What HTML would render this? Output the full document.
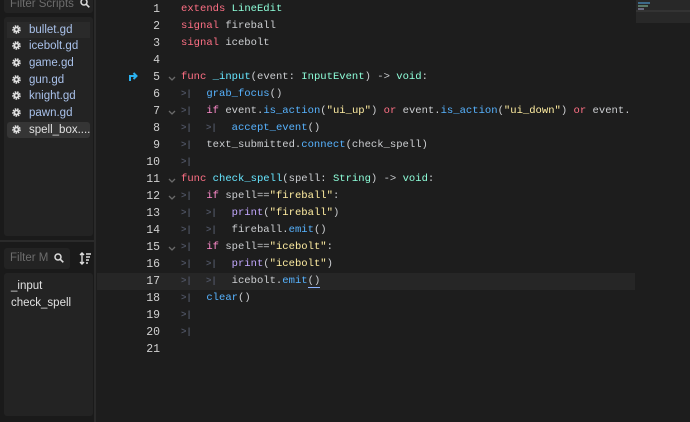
<!DOCTYPE html>
<html><head><style>
*{margin:0;padding:0;box-sizing:border-box}
body{width:690px;height:422px;background:#1d1d1d;overflow:hidden;position:relative;font-family:"Liberation Sans",sans-serif;color:#d4d4d4}
.side{position:absolute;left:0;top:0;width:96px;height:422px;background:#1a1a1a;border-right:2px solid #2a2a2a}
.box{position:absolute;background:#232323;border-radius:3px}
.file{position:absolute;left:7px;height:16px;width:83px;font-size:11.5px;line-height:16px;color:#a9c1ea;padding-left:22px}
.file.sel{background:#353535;border-radius:3px;color:#e0e0e0}
.file.hov{background:#2a2a2a}
.gear{position:absolute;left:4px;top:2px;width:11px;height:11px}
.code{position:absolute;left:0;top:0;font-family:"Liberation Mono",monospace;font-size:10.55px}
.ln{position:absolute;left:100px;width:60px;text-align:right;color:#d0d0d0;height:17px;line-height:17px;font-size:11.5px}
.tx{position:absolute;left:181px;white-space:pre;height:17px;line-height:17px;color:#cdcfd2}
.tab{position:absolute;color:#4d5261;font-size:9px;height:17px;line-height:17px;font-weight:bold}
.fold{position:absolute;left:168px;width:8px;height:5px}
.k{color:#ff7085}.c{color:#8effda}.f{color:#57b3ff}.s{color:#ffeda1}.w{color:#ff8ccc}.v{color:#cdcfd2}.fn{color:#66e6ff}.b{color:#c3a8ff}
</style></head><body>
<div class="side">
 <div class="box" style="left:4px;top:-6px;width:89px;height:19px;"><span style="position:absolute;left:6px;top:4px;font-size:11.5px;color:#6d6d6d">Filter Scripts</span>
 <svg style="position:absolute;left:76px;top:4px" width="10" height="10" viewBox="0 0 10 10"><circle cx="4" cy="4" r="3" fill="none" stroke="#ddd" stroke-width="1.5"/><line x1="6.3" y1="6.3" x2="9.3" y2="9.3" stroke="#ddd" stroke-width="1.6"/></svg></div>
 <div class="box" style="left:4px;top:17px;width:89px;height:219px;"></div>
 <div class="file hov" style="top:22px"><svg class="gear" viewBox="0 0 12 12"><circle cx="6" cy="6" r="3.6" fill="none" stroke="#e0e0e0" stroke-width="2.2" stroke-dasharray="1.6 0.9"/><circle cx="6" cy="6" r="3.2" fill="#e0e0e0"/><circle cx="6" cy="6" r="1.3" fill="#2a2a2a"/></svg>bullet.gd</div>
 <div class="file" style="top:38px"><svg class="gear" viewBox="0 0 12 12"><circle cx="6" cy="6" r="3.6" fill="none" stroke="#e0e0e0" stroke-width="2.2" stroke-dasharray="1.6 0.9"/><circle cx="6" cy="6" r="3.2" fill="#e0e0e0"/><circle cx="6" cy="6" r="1.3" fill="#232323"/></svg>icebolt.gd</div>
 <div class="file" style="top:55px"><svg class="gear" viewBox="0 0 12 12"><circle cx="6" cy="6" r="3.6" fill="none" stroke="#e0e0e0" stroke-width="2.2" stroke-dasharray="1.6 0.9"/><circle cx="6" cy="6" r="3.2" fill="#e0e0e0"/><circle cx="6" cy="6" r="1.3" fill="#232323"/></svg>game.gd</div>
 <div class="file" style="top:72px"><svg class="gear" viewBox="0 0 12 12"><circle cx="6" cy="6" r="3.6" fill="none" stroke="#e0e0e0" stroke-width="2.2" stroke-dasharray="1.6 0.9"/><circle cx="6" cy="6" r="3.2" fill="#e0e0e0"/><circle cx="6" cy="6" r="1.3" fill="#232323"/></svg>gun.gd</div>
 <div class="file" style="top:88px"><svg class="gear" viewBox="0 0 12 12"><circle cx="6" cy="6" r="3.6" fill="none" stroke="#e0e0e0" stroke-width="2.2" stroke-dasharray="1.6 0.9"/><circle cx="6" cy="6" r="3.2" fill="#e0e0e0"/><circle cx="6" cy="6" r="1.3" fill="#232323"/></svg>knight.gd</div>
 <div class="file" style="top:105px"><svg class="gear" viewBox="0 0 12 12"><circle cx="6" cy="6" r="3.6" fill="none" stroke="#e0e0e0" stroke-width="2.2" stroke-dasharray="1.6 0.9"/><circle cx="6" cy="6" r="3.2" fill="#e0e0e0"/><circle cx="6" cy="6" r="1.3" fill="#232323"/></svg>pawn.gd</div>
 <div class="file sel" style="top:122px"><svg class="gear" viewBox="0 0 12 12"><circle cx="6" cy="6" r="3.6" fill="none" stroke="#e0e0e0" stroke-width="2.2" stroke-dasharray="1.6 0.9"/><circle cx="6" cy="6" r="3.2" fill="#e0e0e0"/><circle cx="6" cy="6" r="1.3" fill="#353535"/></svg>spell_box....</div>
 <div style="position:absolute;left:0;top:240px;width:96px;height:2px;background:#2a2a2a"></div>
 <div class="box" style="left:4px;top:248px;width:66px;height:21px;"><span style="position:absolute;left:6px;top:4px;font-size:11.5px;color:#6d6d6d">Filter M</span>
 <svg style="position:absolute;left:50px;top:5px" width="10" height="10" viewBox="0 0 10 10"><circle cx="4" cy="4" r="3" fill="none" stroke="#ddd" stroke-width="1.5"/><line x1="6.3" y1="6.3" x2="9.3" y2="9.3" stroke="#ddd" stroke-width="1.6"/></svg></div>
 <svg style="position:absolute;left:79px;top:252px" width="13" height="13" viewBox="0 0 13 13" stroke="#ddd" stroke-width="1.4" fill="none"><path d="M3 1v11M1 3l2-2 2 2M1 10l2 2 2-2M7 2h5M7 5h4M7 8h3M7 11h2"/></svg>
 <div class="box" style="left:4px;top:273px;width:89px;height:143px;"></div>
 <div style="position:absolute;left:11px;top:278px;font-size:11.5px;line-height:17px;color:#e0e0e0">_input<br>check_spell</div>
</div>
<div style="position:absolute;left:97px;top:273px;width:538px;height:17px;background:#262626"></div>
<div style="position:absolute;left:636px;top:0;width:54px;height:23px;background:#282828"></div>
<div style="position:absolute;left:636px;top:10px;width:54px;height:2px;background:#333"></div>
<div style="position:absolute;left:638px;top:2px;width:12px;height:2px;background:#3d6a8a"></div>
<div style="position:absolute;left:638px;top:5px;width:10px;height:2px;background:#5a7a6a"></div>
<div style="position:absolute;left:638px;top:8px;width:6px;height:2px;background:#6a6a80"></div>
<svg style="position:absolute;left:128px;top:71px" width="10" height="10" viewBox="0 0 10 10" fill="none" stroke="#2bb1ef" stroke-width="2"><path d="M2 10V5h6M5.5 2l3 3-3 3"/></svg>
<svg class="fold" style="position:absolute;top:76px" viewBox="0 0 8 5"><path d="M1 1l3 3 3-3" fill="none" stroke="#6a6a6a" stroke-width="1.3"/></svg>
<svg class="fold" style="position:absolute;top:110px" viewBox="0 0 8 5"><path d="M1 1l3 3 3-3" fill="none" stroke="#6a6a6a" stroke-width="1.3"/></svg>
<svg class="fold" style="position:absolute;top:178px" viewBox="0 0 8 5"><path d="M1 1l3 3 3-3" fill="none" stroke="#6a6a6a" stroke-width="1.3"/></svg>
<svg class="fold" style="position:absolute;top:195px" viewBox="0 0 8 5"><path d="M1 1l3 3 3-3" fill="none" stroke="#6a6a6a" stroke-width="1.3"/></svg>
<svg class="fold" style="position:absolute;top:246px" viewBox="0 0 8 5"><path d="M1 1l3 3 3-3" fill="none" stroke="#6a6a6a" stroke-width="1.3"/></svg>
<div class="code">
<div class="ln" style="top:1px">1</div><div class="tx" style="top:1px"><span class="k">extends</span> <span class="c">LineEdit</span></div>
<div class="ln" style="top:18px">2</div><div class="tx" style="top:18px"><span class="k">signal</span> fireball</div>
<div class="ln" style="top:35px">3</div><div class="tx" style="top:35px"><span class="k">signal</span> icebolt</div>
<div class="ln" style="top:52px">4</div>
<div class="ln" style="top:69px">5</div><div class="tx" style="top:69px"><span class="k">func</span> <span class="fn">_input</span>(event: <span class="c">InputEvent</span>) -&gt; <span class="c">void</span>:</div>
<div class="ln" style="top:86px">6</div><div class="tab" style="left:181px;top:86px">&gt;|</div><div class="tx" style="top:86px">    <span class="f">grab_focus</span>()</div>
<div class="ln" style="top:103px">7</div><div class="tab" style="left:181px;top:103px">&gt;|</div><div class="tx" style="top:103px">    <span class="w">if</span> event.<span class="f">is_action</span>(<span class="s">"ui_up"</span>) <span class="k">or</span> event.<span class="f">is_action</span>(<span class="s">"ui_down"</span>) <span class="k">or</span> event.</div>
<div class="ln" style="top:120px">8</div><div class="tab" style="left:181px;top:120px">&gt;|</div><div class="tab" style="left:206px;top:120px">&gt;|</div><div class="tx" style="top:120px">        <span class="f">accept_event</span>()</div>
<div class="ln" style="top:137px">9</div><div class="tab" style="left:181px;top:137px">&gt;|</div><div class="tx" style="top:137px">    text_submitted.<span class="f">connect</span>(check_spell)</div>
<div class="ln" style="top:154px">10</div><div class="tab" style="left:181px;top:154px">&gt;|</div>
<div class="ln" style="top:171px">11</div><div class="tx" style="top:171px"><span class="k">func</span> <span class="fn">check_spell</span>(spell: <span class="c">String</span>) -&gt; <span class="c">void</span>:</div>
<div class="ln" style="top:188px">12</div><div class="tab" style="left:181px;top:188px">&gt;|</div><div class="tx" style="top:188px">    <span class="w">if</span> spell==<span class="s">"fireball"</span>:</div>
<div class="ln" style="top:205px">13</div><div class="tab" style="left:181px;top:205px">&gt;|</div><div class="tab" style="left:206px;top:205px">&gt;|</div><div class="tx" style="top:205px">        <span class="b">print</span>(<span class="s">"fireball"</span>)</div>
<div class="ln" style="top:222px">14</div><div class="tab" style="left:181px;top:222px">&gt;|</div><div class="tab" style="left:206px;top:222px">&gt;|</div><div class="tx" style="top:222px">        fireball.<span class="f">emit</span>()</div>
<div class="ln" style="top:239px">15</div><div class="tab" style="left:181px;top:239px">&gt;|</div><div class="tx" style="top:239px">    <span class="w">if</span> spell==<span class="s">"icebolt"</span>:</div>
<div class="ln" style="top:256px">16</div><div class="tab" style="left:181px;top:256px">&gt;|</div><div class="tab" style="left:206px;top:256px">&gt;|</div><div class="tx" style="top:256px">        <span class="b">print</span>(<span class="s">"icebolt"</span>)</div>
<div class="ln" style="top:273px">17</div><div class="tab" style="left:181px;top:273px">&gt;|</div><div class="tab" style="left:206px;top:273px">&gt;|</div><div class="tx" style="top:273px">        icebolt.<span class="f">emit</span><span style="border-bottom:1px solid #8cb4ff">()</span></div>
<div class="ln" style="top:290px">18</div><div class="tab" style="left:181px;top:290px">&gt;|</div><div class="tx" style="top:290px">    <span class="f">clear</span>()</div>
<div class="ln" style="top:307px">19</div><div class="tab" style="left:181px;top:307px">&gt;|</div>
<div class="ln" style="top:324px">20</div><div class="tab" style="left:181px;top:324px">&gt;|</div>
<div class="ln" style="top:341px">21</div>
</div>
</body></html>
